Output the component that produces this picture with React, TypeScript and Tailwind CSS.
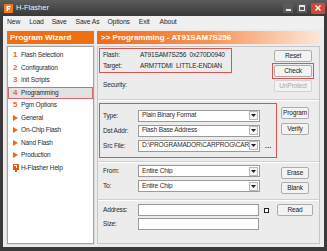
import React from "react";

const Tri = () => (
  <svg width="5" height="6" viewBox="0 0 5 6" className="block">
    <path d="M0 0 L5 3 L0 6 Z" fill="#ee6a12" />
  </svg>
);

const Arrow = () => (
  <span className="mr-[1px] flex h-[9px] w-[9px] shrink-0 items-center justify-center border border-[#b9b9b9] bg-[#f4f4f4]">
    <svg width="5" height="3" viewBox="0 0 5 3" className="block">
      <path d="M0 0 L5 0 L2.5 3 Z" fill="#222" />
    </svg>
  </span>
);

function Select({ text, w = 122 }: { text: string; w?: number }) {
  return (
    <div
      className="flex h-[12px] shrink-0 items-center border border-[#9a9a9a] bg-white pl-[3px]"
      style={{ width: w }}
    >
      <span className="flex-1 overflow-hidden whitespace-nowrap leading-none">{text}</span>
      <Arrow />
    </div>
  );
}

function Btn({ label, w = 38, disabled = false }: { label: string; w?: number; disabled?: boolean }) {
  return (
    <div
      className={
        "flex h-[12px] items-center justify-center rounded-[2px] border bg-[#f3f3f3] leading-none " +
        (disabled ? "border-[#d2d2d2] text-[#a8a8a8]" : "border-[#acacac] text-[#222]")
      }
      style={{ width: w }}
    >
      {label}
    </div>
  );
}

function Divider() {
  return <div className="h-[2px] w-full border-b border-t border-b-white border-t-[#d0d0d0]" />;
}

export default function App() {
  const num = (n: string) => <span className="text-[8px] font-bold text-[#ee6a12]">{n}</span>;
  const items: { icon: React.ReactNode; label: string; active?: boolean }[] = [
    { icon: num("1"), label: "Flash Selection" },
    { icon: num("2"), label: "Configuration" },
    { icon: num("3"), label: "Init Scripts" },
    { icon: num("4"), label: "Programming", active: true },
    { icon: num("5"), label: "Pgm Options" },
    { icon: <Tri />, label: "General" },
    { icon: <Tri />, label: "On-Chip Flash" },
    { icon: <Tri />, label: "Nand Flash" },
    { icon: <Tri />, label: "Production" },
    {
      icon: (
        <svg width="6" height="8" viewBox="0 0 6 8" className="block">
          <rect x="0" y="0" width="6" height="6" fill="#e2571c" />
          <rect x="1" y="1" width="3" height="1" fill="#fff" />
          <rect x="3" y="2" width="1" height="2" fill="#fff" />
          <rect x="2" y="6" width="2" height="2" fill="#e2571c" />
        </svg>
      ),
      label: "H-Flasher Help",
    },
  ];

  return (
    <div className="flex h-[251px] w-[327px] flex-col overflow-hidden bg-[#3a3a3a] font-[family-name:'Liberation_Sans',Arial,sans-serif] text-[6.5px] tracking-[-0.15px] text-[#2a2a2a]">
      {/* Title bar */}
      <div className="flex h-[16px] shrink-0 items-center bg-gradient-to-b from-[#5c5c5c] to-[#383838] pl-[4px] pr-[2px]">
        <svg width="9" height="9" viewBox="0 0 9 9" className="block">
          <rect width="9" height="9" rx="1" fill="#f07a1a" />
          <path d="M2.5 2 H6.5 V3.3 H4 V4.3 H6 V5.5 H4 V7.2 H2.5 Z" fill="#fff" />
        </svg>
        <span className="ml-[3px] text-[7.5px] tracking-normal text-[#f2f2f2]">H-Flasher</span>
        <div className="ml-auto flex items-center gap-[4px]">
          <div className="flex h-[10px] w-[10px] items-end justify-center rounded-[1px] bg-[#5a5a5a] pb-[2px]">
            <div className="h-[2px] w-[5px] bg-[#e8e8e8]" />
          </div>
          <div className="flex h-[10px] w-[10px] items-center justify-center rounded-[1px] bg-[#5a5a5a]">
            <div className="h-[6px] w-[6px] border border-t-2 border-[#e8e8e8]" />
          </div>
          <div className="flex h-[11px] w-[14px] items-center justify-center rounded-[1px] bg-[#cf4a33]">
            <svg width="6" height="6" viewBox="0 0 6 6" className="block">
              <path d="M0.5 0.5 L5.5 5.5 M5.5 0.5 L0.5 5.5" stroke="#fff" strokeWidth="1.4" />
            </svg>
          </div>
        </div>
      </div>

      {/* Body */}
      <div className="mb-[4px] ml-[3px] mr-[3px] flex flex-1 flex-col bg-[#ececec]">
        {/* Menu */}
        <div className="flex h-[13px] shrink-0 items-center bg-[#f0f0f0] pl-[4px] text-[6.8px]">
          <span>New</span>
          <span className="ml-[9px]">Load</span>
          <span className="ml-[8px]">Save</span>
          <span className="ml-[9px]">Save As</span>
          <span className="ml-[8px]">Options</span>
          <span className="ml-[9px]">Exit</span>
          <span className="ml-[10px]">About</span>
        </div>

        {/* Main */}
        <div className="flex flex-1 gap-[3px] pb-[3px] pl-[4px] pr-[4px] pt-[2px]">
          {/* Left column */}
          <div className="flex w-[87px] flex-col gap-[2px]">
            <div className="flex h-[13px] items-center bg-[#f16f13] pl-[3px] text-[8px] font-bold tracking-normal text-white">
              Program Wizard
            </div>
            <div className="flex-1 border border-[#a5a5a5] bg-white pt-[2px] shadow-[0_0_0_1px_#dcdcdc]">
              {items.map((it) => (
                <div
                  key={it.label}
                  className={
                    "flex h-[12.5px] items-center " +
                    (it.active ? "border border-[#d46a6a] bg-[#e2e2e2] pl-[4px]" : "pl-[5px]")
                  }
                >
                  <span className="flex w-[8px] items-center">{it.icon}</span>
                  <span>{it.label}</span>
                </div>
              ))}
            </div>
          </div>

          {/* Right column */}
          <div className="flex w-[223px] flex-col gap-[2px]">
            <div className="flex h-[13px] items-center bg-gradient-to-r from-[#f06a10] via-[#f5934f] to-[#fbe6d8] pl-[4px] text-[8px] font-bold tracking-normal text-white">
              &gt;&gt; Programming - AT91SAM7S256
            </div>
            <div className="flex flex-1 flex-col border border-[#c6c6c6] bg-[#ececec]">
              {/* Section A */}
              <div className="flex h-[52px] pt-[1px]">
                <div className="flex flex-col pl-[1px]">
                  <div className="flex h-[25px] w-[133px] flex-col justify-center border border-[#d9534f]">
                    <div className="flex h-[11px] items-center whitespace-nowrap pl-[3px]">
                      <span className="w-[37px]">Flash:</span>
                      <span>AT91SAM7S256&nbsp;&nbsp;0x270D0940</span>
                    </div>
                    <div className="flex h-[11px] items-center whitespace-nowrap pl-[3px]">
                      <span className="w-[37px]">Target:</span>
                      <span>ARM7TDMI&nbsp;&nbsp;LITTLE-ENDIAN</span>
                    </div>
                  </div>
                  <div className="mt-[6px] flex h-[12px] items-center pl-[4px]">Security:</div>
                </div>
                <div className="ml-auto mr-[5px] flex flex-col items-center pt-[2px]">
                  <Btn label="Reset" />
                  <div className="mt-[1px] border border-[#d9534f] p-[1px]">
                    <Btn label="Check" />
                  </div>
                  <div className="mt-[1px]">
                    <Btn label="UnProtect" disabled />
                  </div>
                </div>
              </div>
              <Divider />
              {/* Section B */}
              <div className="flex h-[60px] pt-[2px]">
                <div className="ml-[1px] flex h-[55px] w-[178px] flex-col justify-center gap-[3px] border border-[#d9534f] pl-[3px]">
                  <div className="flex items-center">
                    <span className="w-[35px]">Type:</span>
                    <Select text="Plain Binary Format" />
                  </div>
                  <div className="flex items-center">
                    <span className="w-[35px]">Dst Addr:</span>
                    <Select text="Flash Base Address" />
                  </div>
                  <div className="flex items-center">
                    <span className="w-[35px]">Src File:</span>
                    <Select text="D:\PROGRAMADOR\CARPROG\CAR" />
                    <span className="ml-[5px] font-bold tracking-[0.5px]">...</span>
                  </div>
                </div>
                <div className="ml-auto mr-[10px] flex flex-col gap-[4px] pt-[4px]">
                  <Btn label="Program" w={28} />
                  <Btn label="Verify" w={28} />
                </div>
              </div>
              <Divider />
              {/* Section C */}
              <div className="flex h-[36px] pt-[2px]">
                <div className="flex flex-col gap-[3px] pl-[5px]">
                  <div className="flex items-center">
                    <span className="w-[35px]">From:</span>
                    <Select text="Entire Chip" />
                  </div>
                  <div className="flex items-center">
                    <span className="w-[35px]">To:</span>
                    <Select text="Entire Chip" />
                  </div>
                </div>
                <div className="ml-auto mr-[10px] flex flex-col gap-[3px] pt-[2px]">
                  <Btn label="Erase" w={28} />
                  <Btn label="Blank" w={28} />
                </div>
              </div>
              <Divider />
              {/* Section D */}
              <div className="flex pt-[3px]">
                <div className="flex flex-col gap-[2px] pl-[5px]">
                  <div className="flex items-center">
                    <span className="w-[35px]">Address:</span>
                    <div className="h-[12px] w-[121px] border border-[#9a9a9a] bg-white" />
                    <div className="ml-[5px] h-[5px] w-[5px] border border-[#222] bg-white" />
                  </div>
                  <div className="flex items-center">
                    <span className="w-[35px]">Size:</span>
                    <div className="h-[12px] w-[121px] border border-[#9a9a9a] bg-white" />
                  </div>
                </div>
                <div className="ml-auto mr-[6px]">
                  <Btn label="Read" w={36} />
                </div>
              </div>
            </div>
          </div>
        </div>
      </div>
    </div>
  );
}
